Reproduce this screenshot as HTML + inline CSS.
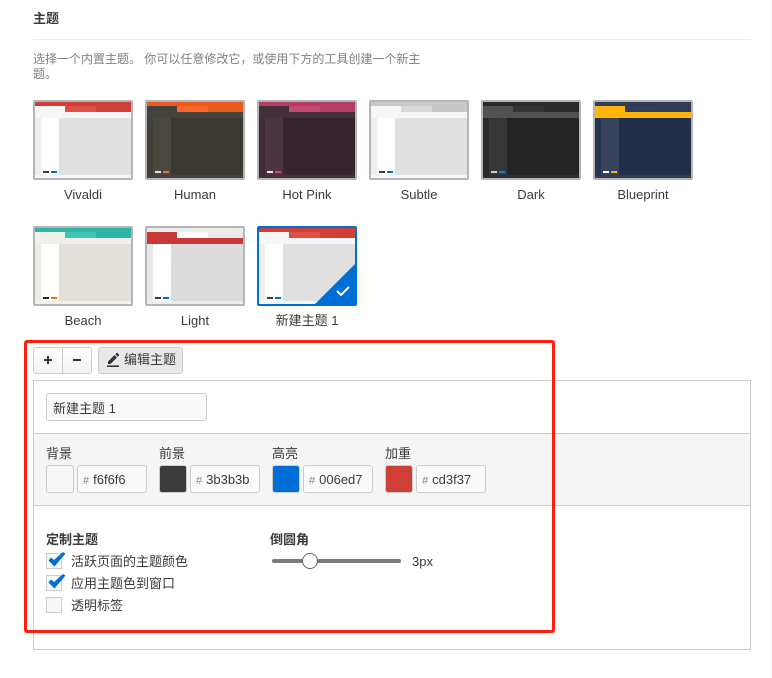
<!DOCTYPE html>
<html>
<head>
<meta charset="utf-8">
<style>
html,body{margin:0;padding:0;background:#fff;}
body{width:772px;height:678px;position:relative;overflow:hidden;font-family:"Liberation Sans","Noto Sans CJK SC",sans-serif;font-size:13px;color:#3b3b3b;}
.a{position:absolute;}
.t{position:absolute;white-space:nowrap;line-height:18px;}
.th{position:absolute;width:96px;height:76px;border:2px solid #b5b5b5;border-radius:2px;overflow:hidden;}
.th.sel{border-color:#006ed7;}
.th div{position:absolute;}
.lab{position:absolute;width:100px;text-align:center;line-height:18px;white-space:nowrap;}
.sw{position:absolute;width:26px;height:26px;border:1px solid #ccc;border-radius:3px;top:465px;}
.inp{position:absolute;width:68px;height:26px;border:1px solid #ccc;border-radius:3px;background:#fafafa;top:465px;line-height:28px;box-sizing:content-box;white-space:nowrap;font-size:13px;}
.inp i{font-style:normal;color:#888;font-size:11px;margin-left:5px;margin-right:4px;}
.cb{position:absolute;left:46px;width:14px;height:14px;border:1px solid #ccc;background:#f7f7f7;}
</style>
</head>
<body>
<div class="t" style="left:33px;top:10px;font-weight:bold;font-size:13px;">主题</div>
<div class="a" style="left:33px;top:39px;width:718px;height:1px;background:#ebebeb;"></div>
<div class="t" style="left:33px;top:52px;color:#808080;font-size:12px;line-height:15px;width:395px;white-space:normal;">选择一个内置主题。 你可以任意修改它，或使用下方的工具创建一个新主题。</div>

<!-- Vivaldi -->
<div class="th" style="left:33px;top:100px;background:#f6f6f6;">
<div style="left:0;top:0;width:96px;height:10px;background:#cd3f37;"></div>
<div style="left:0;top:4px;width:30px;height:6px;background:#f6f6f6;"></div>
<div style="left:30px;top:4px;width:31px;height:6px;background:#e04f45;"></div>
<div style="left:0;top:16px;width:96px;height:57px;background:#e0e0e0;"></div>
<div style="left:0;top:16px;width:6px;height:57px;background:#ededed;"></div>
<div style="left:6px;top:16px;width:18px;height:57px;background:#fff;"></div>
<div style="left:8px;top:69px;width:6px;height:2px;background:#3b3b3b;"></div>
<div style="left:16px;top:69px;width:6px;height:2px;background:#006ed7;"></div>
</div>
<div class="lab" style="left:33px;top:186px;">Vivaldi</div>

<!-- Human -->
<div class="th" style="left:145px;top:100px;background:#44423c;">
<div style="left:0;top:0;width:96px;height:10px;background:#ec5a20;"></div>
<div style="left:0;top:4px;width:30px;height:6px;background:#44423c;"></div>
<div style="left:30px;top:4px;width:31px;height:6px;background:#fd652d;"></div>
<div style="left:0;top:16px;width:96px;height:57px;background:#393831;"></div>
<div style="left:0;top:16px;width:6px;height:57px;background:#3f3e37;"></div>
<div style="left:6px;top:16px;width:18px;height:57px;background:#4a4840;"></div>
<div style="left:8px;top:69px;width:6px;height:2px;background:#e8e5dc;"></div>
<div style="left:16px;top:69px;width:6px;height:2px;background:#e9762f;"></div>
</div>
<div class="lab" style="left:145px;top:186px;">Human</div>

<!-- Hot Pink -->
<div class="th" style="left:257px;top:100px;background:#42303b;">
<div style="left:0;top:0;width:96px;height:10px;background:#b43c66;"></div>
<div style="left:0;top:4px;width:30px;height:6px;background:#42303b;"></div>
<div style="left:30px;top:4px;width:31px;height:6px;background:#c44a71;"></div>
<div style="left:0;top:16px;width:96px;height:57px;background:#38242f;"></div>
<div style="left:0;top:16px;width:6px;height:57px;background:#3f2b36;"></div>
<div style="left:6px;top:16px;width:18px;height:57px;background:#4a3540;"></div>
<div style="left:8px;top:69px;width:6px;height:2px;background:#f3dfea;"></div>
<div style="left:16px;top:69px;width:6px;height:2px;background:#ec3a8c;"></div>
</div>
<div class="lab" style="left:257px;top:186px;">Hot Pink</div>

<!-- Subtle -->
<div class="th" style="left:369px;top:100px;background:#f6f6f6;">
<div style="left:0;top:0;width:96px;height:10px;background:#c8c8c8;"></div>
<div style="left:0;top:4px;width:30px;height:6px;background:#f6f6f6;"></div>
<div style="left:30px;top:4px;width:31px;height:6px;background:#d8d8d8;"></div>
<div style="left:0;top:16px;width:96px;height:57px;background:#e0e0e0;"></div>
<div style="left:0;top:16px;width:6px;height:57px;background:#ededed;"></div>
<div style="left:6px;top:16px;width:18px;height:57px;background:#fff;"></div>
<div style="left:8px;top:69px;width:6px;height:2px;background:#3b3b3b;"></div>
<div style="left:16px;top:69px;width:6px;height:2px;background:#006ed7;"></div>
</div>
<div class="lab" style="left:369px;top:186px;">Subtle</div>

<!-- Dark -->
<div class="th" style="left:481px;top:100px;background:#525252;">
<div style="left:0;top:0;width:96px;height:10px;background:#2b2b2b;"></div>
<div style="left:0;top:4px;width:30px;height:6px;background:#525252;"></div>
<div style="left:30px;top:4px;width:31px;height:6px;background:#333;"></div>
<div style="left:0;top:10px;width:96px;height:6px;background:#525252;"></div>
<div style="left:0;top:16px;width:96px;height:57px;background:#242424;"></div>
<div style="left:0;top:16px;width:6px;height:57px;background:#2a2a2a;"></div>
<div style="left:6px;top:16px;width:18px;height:57px;background:#363636;"></div>
<div style="left:0;top:73px;width:96px;height:3px;background:#2f2f2f;"></div>
<div style="left:8px;top:69px;width:6px;height:2px;background:#d5d2c8;"></div>
<div style="left:16px;top:69px;width:6px;height:2px;background:#0084e8;"></div>
</div>
<div class="lab" style="left:481px;top:186px;">Dark</div>

<!-- Blueprint -->
<div class="th" style="left:593px;top:100px;background:#2f3a55;">
<div style="left:0;top:0;width:96px;height:10px;background:#2f3a55;"></div>
<div style="left:0;top:4px;width:30px;height:6px;background:#ffb509;"></div>
<div style="left:30px;top:4px;width:31px;height:6px;background:#323e5c;"></div>
<div style="left:0;top:10px;width:96px;height:6px;background:#ffb509;"></div>
<div style="left:0;top:16px;width:96px;height:57px;background:#232f4a;"></div>
<div style="left:0;top:16px;width:6px;height:57px;background:#283550;"></div>
<div style="left:6px;top:16px;width:18px;height:57px;background:#37435d;"></div>
<div style="left:0;top:73px;width:96px;height:3px;background:#2f3a55;"></div>
<div style="left:8px;top:69px;width:6px;height:2px;background:#fff;"></div>
<div style="left:16px;top:69px;width:6px;height:2px;background:#ffb509;"></div>
</div>
<div class="lab" style="left:593px;top:186px;">Blueprint</div>

<!-- Beach -->
<div class="th" style="left:33px;top:226px;background:#f0efe9;">
<div style="left:0;top:0;width:96px;height:10px;background:#2bb5a4;"></div>
<div style="left:0;top:4px;width:30px;height:6px;background:#f0efe9;"></div>
<div style="left:30px;top:4px;width:31px;height:6px;background:#42c4b4;"></div>
<div style="left:0;top:16px;width:96px;height:57px;background:#e1e0da;"></div>
<div style="left:0;top:16px;width:6px;height:57px;background:#ecebe5;"></div>
<div style="left:6px;top:16px;width:18px;height:57px;background:#fffffb;"></div>
<div style="left:8px;top:69px;width:6px;height:2px;background:#25281f;"></div>
<div style="left:16px;top:69px;width:6px;height:2px;background:#e2780d;"></div>
</div>
<div class="lab" style="left:33px;top:312px;">Beach</div>

<!-- Light -->
<div class="th" style="left:145px;top:226px;background:#ececec;">
<div style="left:0;top:0;width:96px;height:10px;background:#ececec;"></div>
<div style="left:0;top:4px;width:30px;height:6px;background:#c93838;"></div>
<div style="left:30px;top:4px;width:31px;height:6px;background:#fff;"></div>
<div style="left:0;top:10px;width:96px;height:6px;background:#c93838;"></div>
<div style="left:0;top:16px;width:96px;height:57px;background:#dcdcdc;"></div>
<div style="left:0;top:16px;width:6px;height:57px;background:#e8e8e8;"></div>
<div style="left:6px;top:16px;width:18px;height:57px;background:#fff;"></div>
<div style="left:0;top:73px;width:96px;height:3px;background:#ececec;"></div>
<div style="left:8px;top:69px;width:6px;height:2px;background:#3b3b3b;"></div>
<div style="left:16px;top:69px;width:6px;height:2px;background:#006ed7;"></div>
</div>
<div class="lab" style="left:145px;top:312px;">Light</div>

<!-- New theme -->
<div class="th sel" style="left:257px;top:226px;background:#f6f6f6;">
<div style="left:0;top:0;width:96px;height:10px;background:#cd3f37;"></div>
<div style="left:0;top:4px;width:30px;height:6px;background:#f6f6f6;"></div>
<div style="left:30px;top:4px;width:31px;height:6px;background:#e04f45;"></div>
<div style="left:0;top:16px;width:96px;height:57px;background:#e0e0e0;"></div>
<div style="left:0;top:16px;width:6px;height:57px;background:#ededed;"></div>
<div style="left:6px;top:16px;width:18px;height:57px;background:#fff;"></div>
<div style="left:8px;top:69px;width:6px;height:2px;background:#3b3b3b;"></div>
<div style="left:16px;top:69px;width:6px;height:2px;background:#006ed7;"></div>
<svg style="position:absolute;left:0;top:0;" width="96" height="76" viewBox="0 0 96 76">
<polygon points="56,76 96,36 96,76" fill="#006ed7"/>
<path d="M78 63 L82 67 L90 59" fill="none" stroke="#fff" stroke-width="2"/>
</svg>
</div>
<div class="lab" style="left:257px;top:312px;">新建主题 1</div>

<!-- Toolbar -->
<div class="a" style="left:33px;top:347px;width:57px;height:25px;border:1px solid #ccc;border-radius:3px;background:linear-gradient(#fff,#f3f3f3);"></div>
<div class="a" style="left:62px;top:348px;width:1px;height:25px;background:#ccc;"></div>
<svg class="a" style="left:43px;top:355px;" width="12" height="12"><path d="M1 5H9M5 1V9" stroke="#333" stroke-width="2" fill="none"/></svg>
<svg class="a" style="left:72px;top:355px;" width="12" height="12"><path d="M1 5H9" stroke="#333" stroke-width="2" fill="none"/></svg>
<div class="a" style="left:98px;top:347px;width:83px;height:25px;border:1px solid #ccc;border-radius:3px;background:#e8e8e8;"></div>
<svg class="a" style="left:106px;top:352px;" width="15" height="16" viewBox="0 0 15 16">
<path d="M2 12 V9.5 L8.5 3 L11 5.5 L4.5 12 Z M9.3 2.2 L10.5 1 Q11 .6 11.5 1 L12.9 2.4 Q13.3 3 12.9 3.4 L11.8 4.7Z" fill="#333"/>
<path d="M1 14.2H13" stroke="#333" stroke-width="1.6"/>
</svg>
<div class="t" style="left:124px;top:351px;">编辑主题</div>

<!-- Panel -->
<div class="a" style="left:33px;top:380px;width:716px;height:268px;border:1px solid #ccc;"></div>
<div class="a" style="left:46px;top:393px;width:159px;height:26px;border:1px solid #ccc;border-radius:3px;background:#fafafa;"></div>
<div class="t" style="left:53px;top:400px;">新建主题 1</div>

<div class="a" style="left:34px;top:433px;width:716px;height:71px;background:#f5f5f5;border-top:1px solid #ccc;border-bottom:1px solid #ccc;"></div>

<div class="t" style="left:46px;top:445px;">背景</div>
<div class="sw" style="left:46px;background:#f6f6f6;"></div>
<div class="inp" style="left:77px;"><i>#</i>f6f6f6</div>

<div class="t" style="left:159px;top:445px;">前景</div>
<div class="sw" style="left:159px;background:#3b3b3b;"></div>
<div class="inp" style="left:190px;"><i>#</i>3b3b3b</div>

<div class="t" style="left:272px;top:445px;">高亮</div>
<div class="sw" style="left:272px;background:#006ed7;"></div>
<div class="inp" style="left:303px;"><i>#</i>006ed7</div>

<div class="t" style="left:385px;top:445px;">加重</div>
<div class="sw" style="left:385px;background:#cd3f37;"></div>
<div class="inp" style="left:416px;"><i>#</i>cd3f37</div>

<div class="t" style="left:46px;top:531px;font-weight:bold;">定制主题</div>
<div class="cb" style="top:553px;"></div>
<div class="cb" style="top:575px;"></div>
<div class="cb" style="top:597px;"></div>
<svg class="a" style="left:46px;top:551px;" width="20" height="40" viewBox="0 0 20 40">
<path d="M2.5 9.5 L5 6.5 L8 9 L17 1 L19.5 2.5 L8.5 15.5 Z" fill="#006ed7"/>
<path d="M2.5 31.5 L5 28.5 L8 31 L17 23 L19.5 24.5 L8.5 37.5 Z" fill="#006ed7"/>
</svg>
<div class="t" style="left:71px;top:553px;">活跃页面的主题颜色</div>
<div class="t" style="left:71px;top:575px;">应用主题色到窗口</div>
<div class="t" style="left:71px;top:597px;">透明标签</div>

<div class="t" style="left:270px;top:531px;font-weight:bold;">倒圆角</div>
<div class="a" style="left:272px;top:559px;width:129px;height:4px;border-radius:2px;background:#7a7a7a;"></div>
<div class="a" style="left:302px;top:553px;width:14px;height:14px;border:1px solid #666;border-radius:50%;background:#fff;"></div>
<div class="t" style="left:412px;top:553px;">3px</div>

<!-- Red box -->
<div class="a" style="left:24px;top:340px;width:525px;height:287px;border:3px solid #ff1f10;border-radius:3px;"></div>
<div class="a" style="left:771px;top:0;width:1px;height:678px;background:#f8f8f8;"></div>
</body>
</html>
